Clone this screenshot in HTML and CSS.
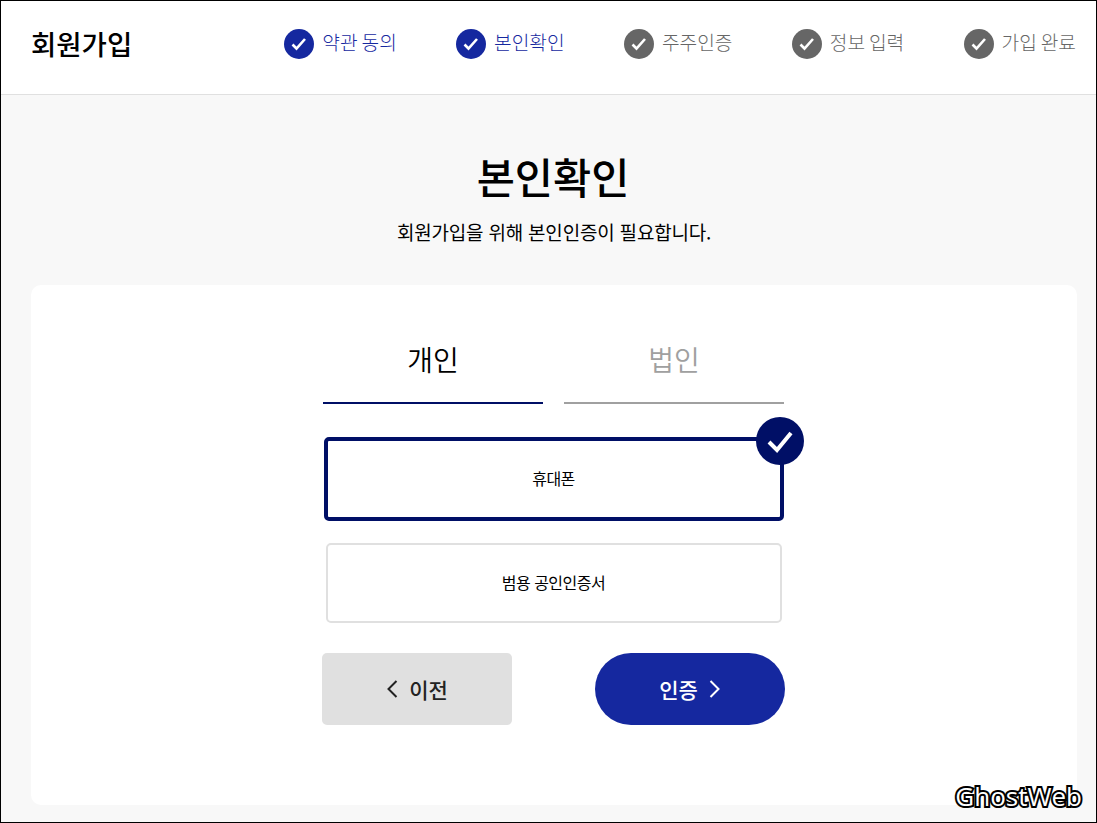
FILE: index.html
```html
<!DOCTYPE html>
<html lang="ko">
<head>
  <meta charset="UTF-8">
  <meta name="viewport" content="width=device-width, initial-scale=1.0">
  <title>회원가입 - 본인확인</title>
  <link rel="stylesheet" href="styles.css">
</head>
<body>
<!-- Header -->
<header class="header">
  <h1 class="logo">회원가입</h1>
  <ol class="steps">
    <li class="step done">
      <svg class="step-icon" viewBox="0 0 30 30"><circle cx="15" cy="15" r="15"/><path d="M8.5 15.5l4 4 8.5-9.5"/></svg>
      <span>약관 동의</span>
    </li>
    <li class="step done">
      <svg class="step-icon" viewBox="0 0 30 30"><circle cx="15" cy="15" r="15"/><path d="M8.5 15.5l4 4 8.5-9.5"/></svg>
      <span>본인확인</span>
    </li>
    <li class="step">
      <svg class="step-icon" viewBox="0 0 30 30"><circle cx="15" cy="15" r="15"/><path d="M8.5 15.5l4 4 8.5-9.5"/></svg>
      <span>주주인증</span>
    </li>
    <li class="step">
      <svg class="step-icon" viewBox="0 0 30 30"><circle cx="15" cy="15" r="15"/><path d="M8.5 15.5l4 4 8.5-9.5"/></svg>
      <span>정보 입력</span>
    </li>
    <li class="step">
      <svg class="step-icon" viewBox="0 0 30 30"><circle cx="15" cy="15" r="15"/><path d="M8.5 15.5l4 4 8.5-9.5"/></svg>
      <span>가입 완료</span>
    </li>
  </ol>
</header>

<!-- Content -->
<main class="content">
  <div class="page-title">
    <h2>본인확인</h2>
    <p>회원가입을 위해 본인인증이 필요합니다.</p>
  </div>

  <section class="card">
    <div class="tabs">
      <a href="#" class="tab active">개인</a>
      <a href="#" class="tab">법인</a>
    </div>

    <div class="options">
      <button type="button" class="option selected">
        휴대폰
        <svg class="option-check" viewBox="0 0 48 48"><circle cx="24" cy="24" r="24"/><path d="M13 25l8 8 14-17"/></svg>
      </button>
      <button type="button" class="option">범용 공인인증서</button>
    </div>

    <div class="actions">
      <button type="button" class="btn btn-prev">
        <svg class="chevron" viewBox="0 0 12 20"><path d="M10.5 2L2.5 10l8 8"/></svg>
        이전
      </button>
      <button type="button" class="btn btn-next">
        인증
        <svg class="chevron" viewBox="0 0 12 20"><path d="M1.5 2l8 8-8 8"/></svg>
      </button>
    </div>
  </section>
</main>

<div class="watermark">GhostWeb</div>
</body>
</html>
```

FILE: styles.css
```css
:root {
  --primary: #15289f;
  --navy: #000f66;
  --gray: #666666;
  --line: #e0e0e0;
}

* {
  margin: 0;
  padding: 0;
  box-sizing: border-box;
  font-family: "Noto Sans CJK KR", "Noto Sans", sans-serif;
}

html, body {
  height: 823px;
  overflow: hidden;
}

body {
  position: relative;
  display: flex;
  flex-direction: column;
  border: 1px solid #000;
  background-color: #f8f8f8;
  color: #000;
}

/* Header */
.header {
  display: flex;
  justify-content: space-between;
  align-items: center;
  height: 94px;
  padding: 0 20px 8px 30px;
  background-color: #fff;
  border-bottom: 1px solid var(--line);
}

.logo {
  font-size: 27.5px;
  font-weight: 500;
  line-height: 40px;
  margin-bottom: 2px;
}

.steps {
  display: flex;
  gap: 59.25px;
  list-style: none;
}

.step {
  display: flex;
  align-items: center;
  gap: 8px;
  color: var(--gray);
  font-size: 19.2px;
  font-weight: 300;
  line-height: 30px;
  word-spacing: -1.5px;
}

.step span {
  padding-bottom: 4px;
}

.step-icon {
  display: block;
  width: 30px;
  height: 30px;
  fill: var(--gray);
}

.step-icon path {
  fill: none;
  stroke: #fff;
  stroke-width: 2.6;
}

.step.done {
  color: var(--primary);
}

.step.done .step-icon {
  fill: var(--primary);
}

/* Content */
.content {
  flex: 1;
  padding: 0 19px 17px 30px;
  display: flex;
  flex-direction: column;
}

.page-title {
  height: 190px;
  padding-top: 51px;
  text-align: center;
}

.page-title h2 {
  font-size: 41.5px;
  font-weight: 500;
  line-height: 60px;
  padding-right: 2px;
}

.page-title p {
  font-size: 19px;
  font-weight: 400;
  line-height: 28px;
  margin-top: 12px;
  letter-spacing: -0.2px;
}

.card {
  flex: 1;
  display: flex;
  flex-direction: column;
  align-items: center;
  background-color: #fff;
  border-radius: 10px;
  padding: 50px 1px 0 0;
}

.tabs {
  display: flex;
  gap: 21px;
  width: 461px;
}

.tab {
  flex: 1;
  height: 69px;
  font-size: 28px;
  font-weight: 350;
  line-height: 48px;
  text-align: center;
  text-decoration: none;
  color: #a0a0a0;
  border-bottom: 2px solid #a0a0a0;
}

.tab.active {
  color: #000;
  border-bottom-color: var(--navy);
}

.options {
  display: flex;
  flex-direction: column;
  align-items: center;
  gap: 22px;
  width: 461px;
  margin-top: 33px;
}

.option {
  position: relative;
  width: 456px;
  height: 80px;
  padding-bottom: 2px;
  background-color: #fff;
  border: 2px solid var(--line);
  border-radius: 5px;
  font-size: 16px;
  font-weight: 400;
  color: #000;
  letter-spacing: -0.5px;
}

.option.selected {
  width: 460px;
  height: 84px;
  border: 4px solid var(--navy);
  border-radius: 5px;
}

.option-check {
  position: absolute;
  top: -24px;
  right: -24px;
  width: 48px;
  height: 48px;
  fill: var(--navy);
}

.option-check path {
  fill: none;
  stroke: #fff;
  stroke-width: 4;
}

.actions {
  display: flex;
  justify-content: space-between;
  width: 463px;
  margin-top: 30px;
}

.btn {
  display: flex;
  justify-content: center;
  align-items: center;
  gap: 11px;
  width: 190px;
  height: 72px;
  border: none;
  font-size: 21px;
  font-weight: 500;
}

.chevron {
  width: 12px;
  height: 20px;
}

.chevron path {
  fill: none;
  stroke: currentColor;
  stroke-width: 2;
}

.btn-prev {
  background-color: var(--line);
  border-radius: 5px;
  color: #222;
}

.btn-next {
  background-color: var(--primary);
  border-radius: 36px;
  color: #fff;
}

.watermark {
  position: absolute;
  right: 14px;
  bottom: 9px;
  font-family: "Open Sans", sans-serif;
  font-size: 26px;
  line-height: 34px;
  color: #fff;
  -webkit-text-stroke: 4px #000;
  paint-order: stroke fill;
}
```
